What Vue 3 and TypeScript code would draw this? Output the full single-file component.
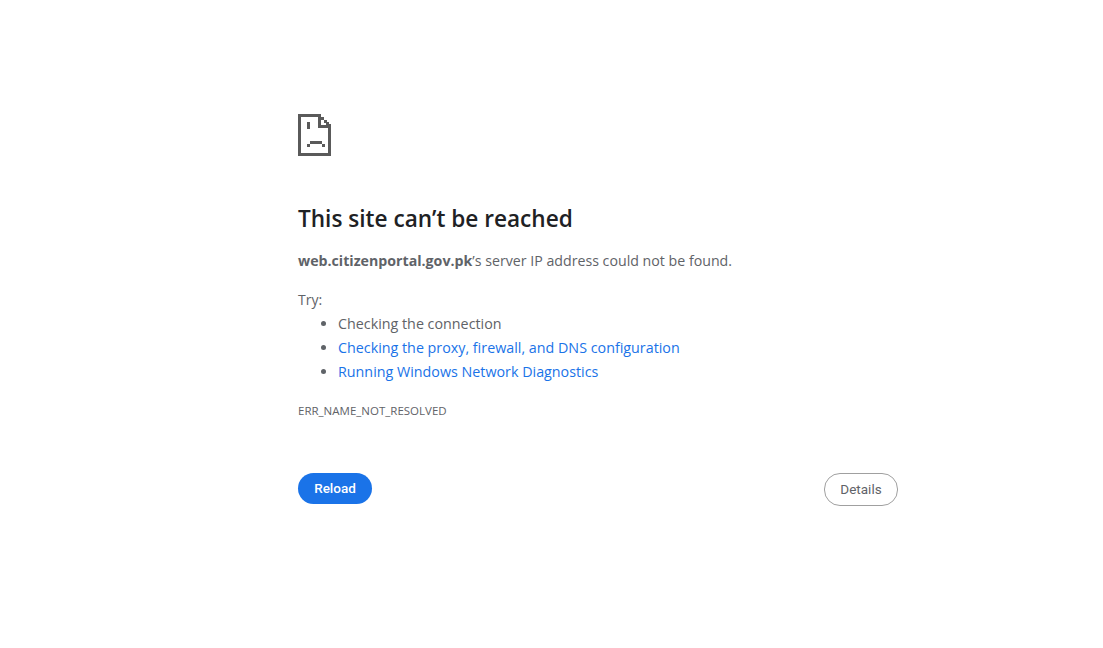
<script setup lang="ts">
const host = 'web.citizenportal.gov.pk'
const tries = [
  { label: 'Checking the connection', link: false },
  { label: 'Checking the proxy, firewall, and DNS configuration', link: true },
  { label: 'Running Windows Network Diagnostics', link: true },
]
</script>

<template>
  <div class="interstitial">
    <svg class="sad-page" width="34" height="42" viewBox="0 0 34 42" shape-rendering="crispEdges" aria-hidden="true">
      <g fill="#5a5a5a">
        <rect x="0" y="0" width="23" height="3" />
        <rect x="0" y="0" width="3" height="42" />
        <rect x="0" y="39" width="33" height="3" />
        <rect x="30" y="10" width="3" height="32" />
        <rect x="20" y="0" width="3" height="14" />
        <rect x="20" y="11" width="13" height="3" />
        <rect x="23" y="3" width="3" height="3" />
        <rect x="26" y="6" width="3" height="3" />
        <rect x="28" y="8" width="3" height="3" />
        <rect x="9" y="8" width="3" height="7" />
        <rect x="12" y="27" width="12" height="3" />
        <rect x="9" y="30" width="3" height="3" />
        <rect x="24" y="30" width="3" height="3" />
      </g>
    </svg>

    <h1 class="heading">This site can’t be reached</h1>
    <p class="summary"><strong>{{ host }}</strong>’s server IP address could not be found.</p>

    <p class="try-label">Try:</p>
    <ul class="try-list">
      <li v-for="item in tries" :key="item.label">
        <a v-if="item.link" href="#" class="try-link">{{ item.label }}</a>
        <template v-else>{{ item.label }}</template>
      </li>
    </ul>

    <div class="error-code">ERR_NAME_NOT_RESOLVED</div>

    <div class="actions">
      <button class="btn-reload">Reload</button>
      <button class="btn-details">Details</button>
    </div>
  </div>
</template>

<style>
html, body { background: #fff; }
</style>

<style scoped>
.interstitial {
  width: 600px;
  margin-left: 298px;
  padding-top: 114px;
  box-sizing: border-box;
  font-family: "Open Sans", "Noto Sans", sans-serif;
  color: #5f6368;
  font-size: 14.3px;
}
.sad-page { display: block; }
.heading {
  margin: 48px 0 0;
  font-size: 22.6px;
  line-height: 30px;
  font-weight: 600;
  color: #202124;
}
.summary { margin: 15px 0 0; font-size: 14.2px; line-height: 24px; }
.summary strong { font-weight: 700; }
.try-label { margin: 15px 0 0; font-size: 14px; line-height: 24px; }
.try-list { margin: 0; padding: 0 0 0 40px; line-height: 24px; }
.try-link { color: #1a73e8; text-decoration: none; }
.error-code { margin-top: 17px; font-size: 11.5px; line-height: 20px; }
.actions {
  display: flex;
  justify-content: space-between;
  align-items: flex-start;
  margin-top: 52px;
}
.btn-reload, .btn-details { font-family: Roboto, sans-serif; font-size: 13.5px; border-radius: 16px; cursor: pointer; padding: 0 0 1px; }
.btn-reload {
  width: 74px; height: 31px;
  background: #1a73e8; color: #fff; border: none; font-weight: 500;
}
.btn-details {
  width: 74px; height: 33px;
  background: #fff; color: #5f6368; border: 1px solid #a0a0a0;
  font-weight: 400;
}
</style>
